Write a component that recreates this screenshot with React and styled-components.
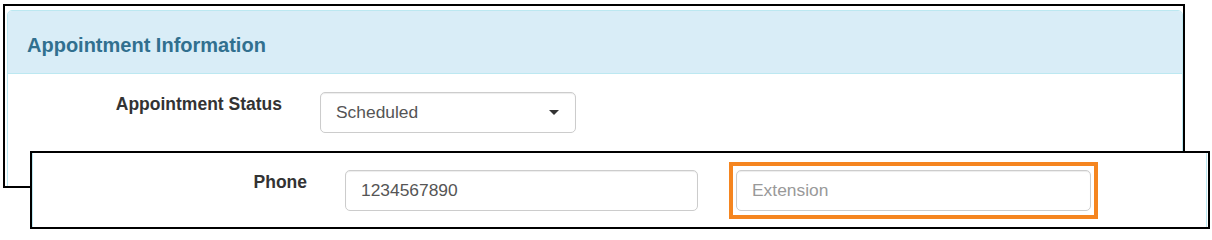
import React from 'react';
import styled, { createGlobalStyle } from 'styled-components';

const Global = createGlobalStyle`
  html, body { margin: 0; padding: 0; background: #fff; }
  body { font-family: 'Liberation Sans', Arial, sans-serif; color: #333; }
  * { box-sizing: border-box; }
`;

const Canvas = styled.div`
  position: relative;
  width: 1212px;
  height: 234px;
  overflow: hidden;
  padding: 4px 0 0 3px;
`;

const BackShot = styled.div`
  width: 1182px;
  height: 184px;
  border: 2px solid #000;
  overflow: hidden;
  padding: 4px 0 0 2px;
  background: #fff;
`;

const Panel = styled.div`
  border: 1px solid #bce8f1;
  border-radius: 5px;
  background: #fff;
  height: 240px;
`;

const Heading = styled.div`
  height: 63px;
  background: #d9edf7;
  border-bottom: 1px solid #bce8f1;
  border-radius: 4px 4px 0 0;
  padding: 23px 19px 17px;
`;

const Title = styled.h3`
  margin: 0;
  font-size: 20px;
  line-height: 22px;
  font-weight: bold;
  color: #31708f;
`;

const Body = styled.div`
  padding-top: 18px;
`;

const FormRow = styled.div`
  display: flex;
  align-items: flex-start;
`;

const LabelCell = styled.label`
  flex: 0 0 293px;
  padding-right: 19px;
  text-align: right;
  font-size: 17.5px;
  line-height: 25px;
  font-weight: bold;
  color: #333;
`;

const FieldCell = styled.div`
  flex: 0 0 ${p => p.$width}px;
  padding: 0 19px;
`;

const SelectBox = styled.div`
  width: ${p => p.$width}px;
  height: 41px;
  display: flex;
  align-items: center;
  justify-content: space-between;
  padding: 0 16px 0 15px;
  border: 1px solid #ccc;
  border-radius: 5px;
  background: #fff;
  font-size: 17.4px;
  color: #555;
  box-shadow: inset 0 1px 1px rgba(0, 0, 0, 0.075);
`;

const Caret = styled.span`
  width: 0;
  height: 0;
  border-left: 5px solid transparent;
  border-right: 5px solid transparent;
  border-top: 5px solid #333;
`;

const TextInput = styled.input`
  display: block;
  width: 100%;
  height: 41px;
  padding: 0 15px;
  border: 1px solid #ccc;
  border-radius: 5px;
  background: #fff;
  font-family: 'Liberation Sans', Arial, sans-serif;
  font-size: 17.4px;
  color: #555;
  outline: none;
  box-shadow: inset 0 1px 1px rgba(0, 0, 0, 0.075);
  &::placeholder { color: #999; opacity: 1; }
`;

const Overlay = styled.div`
  position: absolute;
  left: 30px;
  top: 151px;
  width: 1180px;
  height: 78px;
  border: 2px solid #000;
  background: #fff;
  padding-right: 1px;
`;

const Slice = styled.div`
  height: 100%;
  border-left: 1px solid #bce8f1;
  border-right: 1px solid #bce8f1;
  padding-top: 17px;
`;

const Highlight = styled.div`
  margin: -8px -7px;
  padding: 4px 3px;
  border: 4px solid #f5851f;
  background: #fff;
`;

export default function App() {
  return (
    <>
      <Global />
      <Canvas>
        <BackShot>
          <Panel>
            <Heading>
              <Title>Appointment Information</Title>
            </Heading>
            <Body>
              <FormRow>
                <LabelCell>Appointment Status</LabelCell>
                <FieldCell $width={400}>
                  <SelectBox $width={256}>
                    <span>Scheduled</span>
                    <Caret />
                  </SelectBox>
                </FieldCell>
              </FormRow>
            </Body>
          </Panel>
        </BackShot>
        <Overlay>
          <Slice>
            <FormRow>
              <LabelCell>Phone</LabelCell>
              <FieldCell $width={391}>
                <TextInput readOnly value="1234567890" />
              </FieldCell>
              <FieldCell $width={393}>
                <Highlight>
                  <TextInput readOnly placeholder="Extension" />
                </Highlight>
              </FieldCell>
            </FormRow>
          </Slice>
        </Overlay>
      </Canvas>
    </>
  );
}
